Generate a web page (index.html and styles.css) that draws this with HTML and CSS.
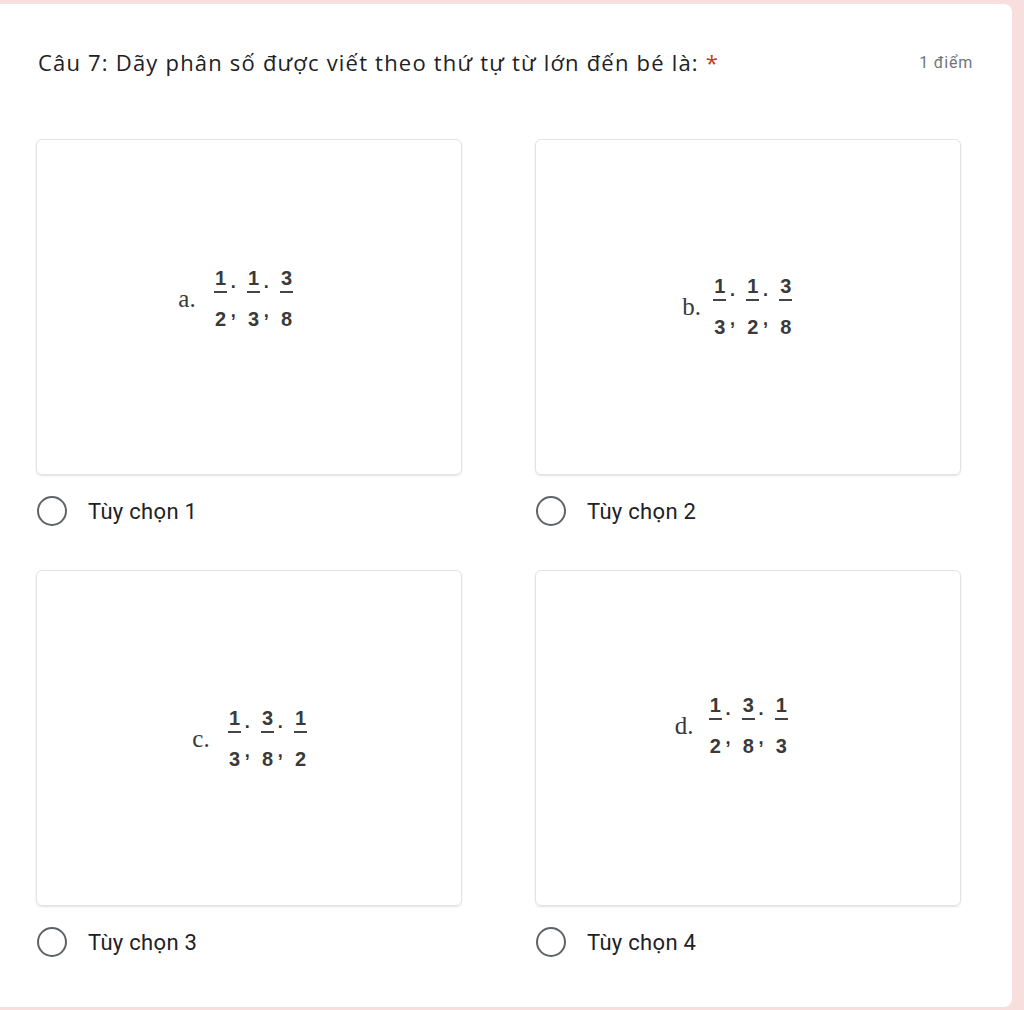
FILE: index.html
```html
<!DOCTYPE html>
<html lang="vi">
<head>
<meta charset="utf-8">
<link rel="stylesheet" href="styles.css">
</head>
<body>
<div class="page">
  <div class="form-card">
    <div class="q-header">
      <div class="q-title">Câu 7: Dãy phân số được viết theo thứ tự từ lớn đến bé là: <span class="req">*</span></div>
      <div class="q-points">1 điểm</div>
    </div>
    <div class="options">
      <div class="option">
        <div class="img-card">
          <div class="expr expr-a">
            <span class="letter">a.</span>
            <span class="frac"><span class="num">1</span><span class="bar"></span><span class="den">2</span></span>
            <span class="sep"><span class="dot">.</span><span class="com">,</span></span>
            <span class="frac"><span class="num">1</span><span class="bar"></span><span class="den">3</span></span>
            <span class="sep"><span class="dot">.</span><span class="com">,</span></span>
            <span class="frac"><span class="num">3</span><span class="bar"></span><span class="den">8</span></span>
          </div>
        </div>
        <label class="radio-row"><span class="radio"></span><span class="label">Tùy chọn 1</span></label>
      </div>
      <div class="option">
        <div class="img-card">
          <div class="expr expr-b">
            <span class="letter">b.</span>
            <span class="frac"><span class="num">1</span><span class="bar"></span><span class="den">3</span></span>
            <span class="sep"><span class="dot">.</span><span class="com">,</span></span>
            <span class="frac"><span class="num">1</span><span class="bar"></span><span class="den">2</span></span>
            <span class="sep"><span class="dot">.</span><span class="com">,</span></span>
            <span class="frac"><span class="num">3</span><span class="bar"></span><span class="den">8</span></span>
          </div>
        </div>
        <label class="radio-row"><span class="radio"></span><span class="label">Tùy chọn 2</span></label>
      </div>
      <div class="option">
        <div class="img-card">
          <div class="expr expr-c">
            <span class="letter">c.</span>
            <span class="frac"><span class="num">1</span><span class="bar"></span><span class="den">3</span></span>
            <span class="sep"><span class="dot">.</span><span class="com">,</span></span>
            <span class="frac"><span class="num">3</span><span class="bar"></span><span class="den">8</span></span>
            <span class="sep"><span class="dot">.</span><span class="com">,</span></span>
            <span class="frac"><span class="num">1</span><span class="bar"></span><span class="den">2</span></span>
          </div>
        </div>
        <label class="radio-row"><span class="radio"></span><span class="label">Tùy chọn 3</span></label>
      </div>
      <div class="option">
        <div class="img-card">
          <div class="expr expr-d">
            <span class="letter">d.</span>
            <span class="frac"><span class="num">1</span><span class="bar"></span><span class="den">2</span></span>
            <span class="sep"><span class="dot">.</span><span class="com">,</span></span>
            <span class="frac"><span class="num">3</span><span class="bar"></span><span class="den">8</span></span>
            <span class="sep"><span class="dot">.</span><span class="com">,</span></span>
            <span class="frac"><span class="num">1</span><span class="bar"></span><span class="den">3</span></span>
          </div>
        </div>
        <label class="radio-row"><span class="radio"></span><span class="label">Tùy chọn 4</span></label>
      </div>
    </div>
  </div>
</div>
</body>
</html>
```

FILE: styles.css
```css
html, body {
  margin: 0;
  padding: 0;
  background: #f9dede;
}
.page {
  width: 1024px;
  height: 1010px;
  padding: 4px 12px 3px 0;
  box-sizing: border-box;
  background: #f9dede;
}
.form-card {
  background: #fff;
  height: 100%;
  border-radius: 0 8px 8px 0;
  box-sizing: border-box;
  padding: 40px 39px 0 36px;
}
.q-header {
  display: flex;
  justify-content: space-between;
  align-items: center;
  padding-left: 2px;
  height: 36px;
}
.q-title {
  font-family: "Open Sans", "Noto Sans", sans-serif;
  font-size: 22px;
  color: #202124;
  letter-spacing: 1.2px;
  white-space: nowrap;
}
.req {
  color: #d93025;
}
.q-points {
  font-family: Roboto, "Liberation Sans", sans-serif;
  font-size: 16px;
  color: #70757a;
  letter-spacing: 0.8px;
}
.options {
  display: grid;
  grid-template-columns: 426px 426px;
  column-gap: 73px;
  row-gap: 44px;
  margin-top: 59px;
}
.option {
  display: flex;
  flex-direction: column;
}
.img-card {
  height: 336px;
  box-sizing: border-box;
  border: 1px solid #e3e3e3;
  border-radius: 6px;
  box-shadow: 0 1px 2px rgba(0,0,0,0.12);
  display: flex;
  justify-content: center;
  align-items: center;
}
.expr {
  display: flex;
  align-items: flex-start;
  color: #333;
}
.expr-a { margin-left: -26px; margin-top: -18px; }
.expr-b { margin-left: -21px; margin-top: -1px; }
.expr-c { margin-left: 2px; margin-top: 1px; }
.expr-d { margin-left: -33px; margin-top: -25px; }
.letter {
  font-family: "Liberation Serif", "DejaVu Serif", serif;
  font-size: 25px;
  line-height: 28px;
  margin-top: 17px;
  margin-right: 18px;
  color: #3a3a3a;
}
.expr-b .letter { margin-right: 12px; }
.expr-d .letter { margin-right: 15px; }
.frac {
  display: inline-flex;
  flex-direction: column;
  align-items: center;
  width: 14px;
  font-family: "Liberation Sans", Arial, sans-serif;
  font-weight: bold;
  font-size: 20px;
  line-height: 20px;
  color: #3a3a3a;
}
.num, .den {
  display: block;
}
.bar {
  display: block;
  width: 13px;
  height: 2px;
  background: #444;
  margin-top: 3px;
}
.den {
  margin-top: 16px;
}
.sep {
  display: inline-flex;
  flex-direction: column;
  align-items: center;
  width: 5px;
  margin: 0 11px 0 3px;
  font-family: "Liberation Sans", sans-serif;
  font-weight: bold;
  font-size: 18px;
  line-height: 18px;
  color: #333;
}
.dot {
  display: block;
  margin-top: 5px;
}
.com {
  display: block;
  margin-top: 11px;
}
.radio-row {
  display: flex;
  align-items: center;
  margin-top: 21px;
  height: 30px;
}
.radio {
  width: 30px;
  height: 30px;
  box-sizing: border-box;
  border: 2.5px solid #5f6368;
  border-radius: 50%;
  margin-left: 1px;
}
.label {
  font-family: Roboto, "Liberation Sans", sans-serif;
  font-size: 22px;
  color: #202124;
  margin-left: 21px;
  letter-spacing: 0.3px;
}
```
